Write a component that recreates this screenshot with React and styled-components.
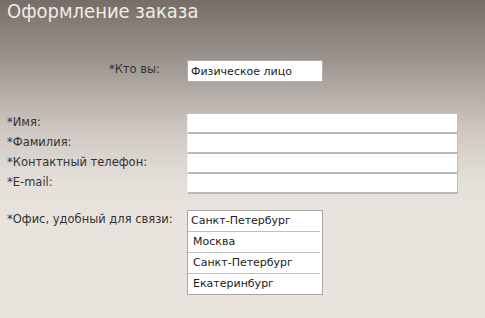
import React from "react";
import styled, { createGlobalStyle } from "styled-components";

const Global = createGlobalStyle`
  html, body { margin: 0; padding: 0; }
  body { font-family: Tahoma, "DejaVu Sans", sans-serif; }
`;

const Page = styled.div`
  width: 485px;
  height: 318px;
  overflow: hidden;
  box-sizing: border-box;
  background: linear-gradient(to bottom, #756d66 0px, #a39b95 70px, #cfc8c2 130px, #e6e0db 185px, #e9e3de 220px, #e9e3de 318px);
  padding: 0 0 0 7px;
  font-family: "DejaVu Sans", sans-serif;
  color: #333;
`;

const Title = styled.h1`
  margin: 0;
  padding-top: 0;
  height: 29px;
  font-family: "DejaVu Sans Condensed", "DejaVu Sans", sans-serif;
  font-weight: normal;
  font-size: 20px;
  line-height: 22px;
  color: #f1ece6;
`;

const WhoRow = styled.div`
  display: flex;
  align-items: center;
  margin-top: 31px;
`;

const WhoLabel = styled.div`
  width: 153px;
  text-align: right;
  font-size: 11.5px;
  color: #333;
  padding-bottom: 4px;
`;

const WhoBox = styled.div`
  margin-left: 27px;
  width: 136px;
  height: 22px;
  box-sizing: border-box;
  background: #fff;
  border: 1px solid #b2aca6;
  font-size: 11px;
  color: #222;
  padding: 4px 0 0 3px;
`;

const Fields = styled.div`
  margin-top: 32px;
  display: grid;
  grid-template-columns: 180px 271px;
`;

const FieldLabel = styled.div`
  height: 20px;
  font-size: 11.5px;
  line-height: 17px;
  color: #333;
`;

const TextBox = styled.div`
  height: 20px;
  box-sizing: border-box;
  background: #fff;
  border-right: 1px solid #bdbdbd;
  border-bottom: 2px solid #b9b9b9;
  border-left: 1px solid #f4f1ee;
`;

const OfficeRow = styled.div`
  display: grid;
  grid-template-columns: 180px 136px;
  margin-top: 16px;
`;

const OfficeLabel = styled.div`
  font-size: 11.5px;
  color: #333;
  padding-top: 2px;
`;

const List = styled.div`
  box-sizing: border-box;
  width: 136px;
  height: 85px;
  background: #fff;
  border: 1px solid #aaa6a2;
  padding: 0 2px 0 0;
`;

const Item = styled.div`
  height: 21px;
  box-sizing: border-box;
  font-size: 11px;
  line-height: 19px;
  color: #222;
  padding-left: ${(p) => (p.$first ? "3px" : "5px")};
  border-bottom: ${(p) => (p.$last ? "none" : "1px solid #c2c0bd")};
`;

const cities = ["Санкт-Петербург", "Москва", "Санкт-Петербург", "Екатеринбург"];
const fields = ["*Имя:", "*Фамилия:", "*Контактный телефон:", "*E-mail:"];

export default function App() {
  return (
    <>
      <Global />
      <Page>
        <Title>Оформление заказа</Title>
        <WhoRow>
          <WhoLabel>*Кто вы:</WhoLabel>
          <WhoBox>Физическое лицо</WhoBox>
        </WhoRow>
        <Fields>
          {fields.map((f) => (
            <React.Fragment key={f}>
              <FieldLabel>{f}</FieldLabel>
              <TextBox />
            </React.Fragment>
          ))}
        </Fields>
        <OfficeRow>
          <OfficeLabel>*Офис, удобный для связи:</OfficeLabel>
          <List>
            {cities.map((c, i) => (
              <Item key={i} $first={i === 0} $last={i === cities.length - 1}>
                {c}
              </Item>
            ))}
          </List>
        </OfficeRow>
      </Page>
    </>
  );
}
